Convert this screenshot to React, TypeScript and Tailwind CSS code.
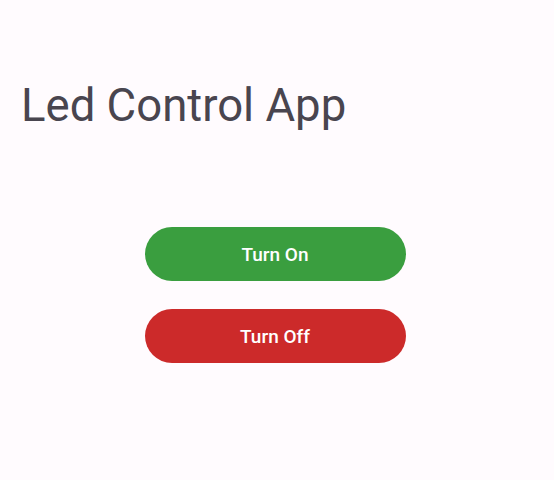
export default function App() {
  return (
    <div
      className="w-[554px] h-[480px] bg-[#fffbfe] flex flex-col"
      style={{ fontFamily: "Roboto, sans-serif" }}
    >
      {/* Title */}
      <h1 className="pl-[21px] pt-[80px] text-[45.5px] leading-[52px] text-[#49454f] font-normal">
        Led Control App
      </h1>

      {/* Buttons */}
      <div className="mt-[95px] flex flex-col items-center gap-[28px]">
        <button className="w-[261px] h-[54px] rounded-full bg-[#3a9e3f] text-white text-[19px] font-medium ml-[-4px] pt-[2px]">
          Turn On
        </button>
        <button className="w-[261px] h-[54px] rounded-full bg-[#cc2a2a] text-white text-[19px] font-medium ml-[-4px] pt-[2px]">
          Turn Off
        </button>
      </div>
    </div>
  );
}
